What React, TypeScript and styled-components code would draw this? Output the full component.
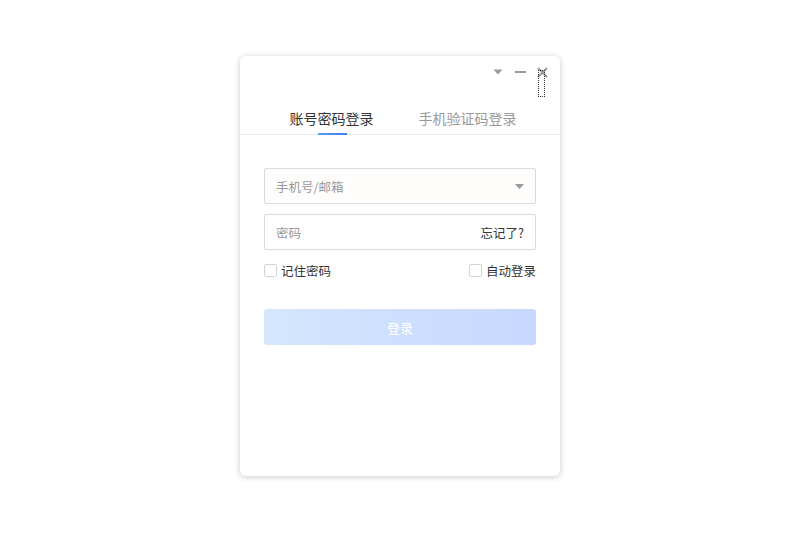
import React from "react";
import styled, { createGlobalStyle } from "styled-components";

const Global = createGlobalStyle`
  html, body { margin: 0; padding: 0; background: #fff; }
  body { font-family: "Noto Sans CJK SC", "Noto Sans", sans-serif; }
`;

const Page = styled.div`
  width: 800px;
  height: 533px;
  display: flex;
  justify-content: center;
  padding-top: 56px;
  box-sizing: border-box;
`;

const Card = styled.div`
  width: 320px;
  height: 420px;
  background: #fff;
  border-radius: 6px;
  box-shadow: 0 1px 6px rgba(0, 0, 0, 0.22);
  display: flex;
  flex-direction: column;
`;

const TitleBar = styled.div`
  display: flex;
  justify-content: flex-end;
  align-items: flex-start;
  gap: 8px;
  padding: 9px 11px 0 0;
  height: 30px;
  box-sizing: border-box;
`;

const IconBtn = styled.button<{ $focus?: boolean }>`
  width: 14px;
  height: 14px;
  padding: 0;
  border: none;
  background: none;
  position: relative;
  display: flex;
  align-items: center;
  justify-content: center;
  ${(p) =>
    p.$focus &&
    `&::after{content:"";position:absolute;left:3px;top:5px;width:5px;height:25px;border:1px dotted #333;}`}
`;

const Tabs = styled.div`
  display: flex;
  justify-content: center;
  gap: 45px;
  border-bottom: 1px solid #e9e9e9;
  margin-top: 22px;
  padding-left: 6px;
`;

const Tab = styled.div<{ $active?: boolean }>`
  font-size: 14px;
  line-height: 20px;
  color: ${(p) => (p.$active ? "#333" : "#999")};
  padding-bottom: 6px;
  position: relative;
  ${(p) =>
    p.$active &&
    `&::after{content:"";position:absolute;left:28px;width:29px;bottom:-1px;height:2px;background:linear-gradient(90deg,#5a9cf8,#3c7cf0);}`}
`;

const Form = styled.div`
  padding: 33px 24px 0;
  display: flex;
  flex-direction: column;
`;

const Field = styled.div<{ $bg?: string }>`
  height: 34px;
  border: 1px solid #dcdcdc;
  border-radius: 2px;
  background: ${(p) => p.$bg || "#fff"};
  display: flex;
  align-items: center;
  justify-content: space-between;
  padding: 0 11px;
  margin-bottom: 10px;
  font-size: 12.5px;
`;

const Placeholder = styled.span`
  color: #999;
`;

const Forgot = styled.span`
  color: #333;
  font-size: 12.5px;
`;

const Checks = styled.div`
  display: flex;
  justify-content: space-between;
  align-items: center;
  margin-top: 1px;
`;

const Check = styled.label`
  display: flex;
  align-items: center;
  gap: 4px;
  font-size: 12.5px;
  color: #333;
`;

const Box = styled.span`
  width: 11px;
  height: 11px;
  border: 1px solid #d4d4d4;
  border-radius: 2px;
  background: #fff;
`;

const LoginBtn = styled.button`
  margin-top: 29px;
  height: 36px;
  border: none;
  border-radius: 3px;
  background: linear-gradient(90deg, #d5e6fe, #c6d8fe);
  color: #fff;
  font-family: inherit;
  font-size: 13px;
`;

export default function App() {
  return (
    <>
      <Global />
      <Page>
        <Card>
          <TitleBar>
            <IconBtn>
              <svg width="10" height="6" viewBox="0 0 10 6">
                <path d="M0.5 0.5 H9.5 L5 5.5 Z" fill="#9a9a9a" />
              </svg>
            </IconBtn>
            <IconBtn>
              <svg width="11" height="2" viewBox="0 0 11 2">
                <rect width="11" height="2" fill="#9a9a9a" />
              </svg>
            </IconBtn>
            <IconBtn $focus>
              <svg width="11" height="11" viewBox="0 0 11 11">
                <path d="M1 1 L10 10 M10 1 L1 10" stroke="#999" strokeWidth="1.8" />
              </svg>
            </IconBtn>
          </TitleBar>
          <Tabs>
            <Tab $active>账号密码登录</Tab>
            <Tab>手机验证码登录</Tab>
          </Tabs>
          <Form>
            <Field $bg="#fefdfb">
              <Placeholder>手机号/邮箱</Placeholder>
              <svg width="9" height="5" viewBox="0 0 9 5">
                <path d="M0 0 H9 L4.5 5 Z" fill="#9a9a9a" />
              </svg>
            </Field>
            <Field>
              <Placeholder>密码</Placeholder>
              <Forgot>忘记了?</Forgot>
            </Field>
            <Checks>
              <Check>
                <Box />
                记住密码
              </Check>
              <Check>
                <Box />
                自动登录
              </Check>
            </Checks>
            <LoginBtn>登录</LoginBtn>
          </Form>
        </Card>
      </Page>
    </>
  );
}
